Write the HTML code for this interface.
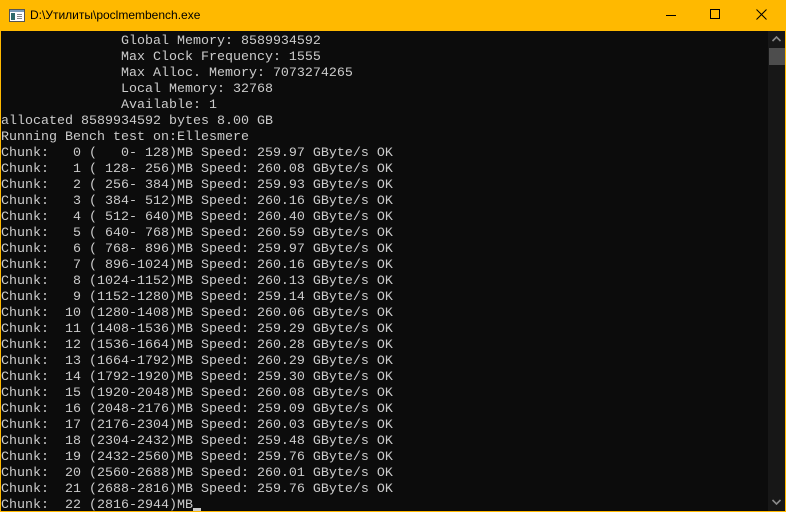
<!DOCTYPE html>
<html><head><meta charset="utf-8"><style>
*{margin:0;padding:0}
html,body{width:786px;height:512px;overflow:hidden;background:#ffb900}
.title{position:absolute;left:0;top:0;width:786px;height:31px;background:#ffb900;font-family:"Liberation Sans",sans-serif;font-size:12px;color:#000}
.title .t{position:absolute;left:30px;top:8px}
.con{position:absolute;left:1px;top:31px;width:767px;height:480px;background:#0c0c0c;overflow:hidden}
pre{font-family:"Liberation Mono",monospace;font-size:13.33px;line-height:16px;color:#cccccc;margin-top:3px;white-space:pre}
.sb{position:absolute;left:768px;top:31px;width:17px;height:480px;background:#171717}
.thumb{position:absolute;left:1px;top:17px;width:16px;height:17px;background:#4d4d4d}
.cur{display:inline-block;width:8px;height:3px;background:#ccc;vertical-align:-3px}
</style></head><body>
<div class="title">
<svg style="position:absolute;left:9px;top:9px" width="16" height="13"><rect x="0.5" y="0.5" width="15" height="12" fill="#fff" stroke="#555"/><rect x="1" y="1" width="14" height="2" fill="#7a9cb8"/><rect x="2" y="4" width="4" height="7" fill="#2f6b6b"/><rect x="8" y="5" width="5" height="1" fill="#888"/><rect x="8" y="7" width="5" height="1" fill="#888"/><rect x="8" y="9" width="5" height="1" fill="#888"/></svg>
<span class="t">D:\Утилиты\poclmembench.exe</span>
<svg style="position:absolute;left:666px;top:10px" width="12" height="12"><line x1="0" y1="5.5" x2="10" y2="5.5" stroke="#000"/></svg>
<svg style="position:absolute;left:710px;top:9px" width="12" height="12"><rect x="0.5" y="0.5" width="9" height="9" fill="none" stroke="#000"/></svg>
<svg style="position:absolute;left:756px;top:9px" width="12" height="12"><path d="M0.5 0.5L10.5 10.5M10.5 0.5L0.5 10.5" stroke="#000"/></svg>
</div>
<div class="con"><pre>               Global Memory: 8589934592
               Max Clock Frequency: 1555
               Max Alloc. Memory: 7073274265
               Local Memory: 32768
               Available: 1
allocated 8589934592 bytes 8.00 GB
Running Bench test on:Ellesmere
Chunk:   0 (   0- 128)MB Speed: 259.97 GByte/s OK
Chunk:   1 ( 128- 256)MB Speed: 260.08 GByte/s OK
Chunk:   2 ( 256- 384)MB Speed: 259.93 GByte/s OK
Chunk:   3 ( 384- 512)MB Speed: 260.16 GByte/s OK
Chunk:   4 ( 512- 640)MB Speed: 260.40 GByte/s OK
Chunk:   5 ( 640- 768)MB Speed: 260.59 GByte/s OK
Chunk:   6 ( 768- 896)MB Speed: 259.97 GByte/s OK
Chunk:   7 ( 896-1024)MB Speed: 260.16 GByte/s OK
Chunk:   8 (1024-1152)MB Speed: 260.13 GByte/s OK
Chunk:   9 (1152-1280)MB Speed: 259.14 GByte/s OK
Chunk:  10 (1280-1408)MB Speed: 260.06 GByte/s OK
Chunk:  11 (1408-1536)MB Speed: 259.29 GByte/s OK
Chunk:  12 (1536-1664)MB Speed: 260.28 GByte/s OK
Chunk:  13 (1664-1792)MB Speed: 260.29 GByte/s OK
Chunk:  14 (1792-1920)MB Speed: 259.30 GByte/s OK
Chunk:  15 (1920-2048)MB Speed: 260.08 GByte/s OK
Chunk:  16 (2048-2176)MB Speed: 259.09 GByte/s OK
Chunk:  17 (2176-2304)MB Speed: 260.03 GByte/s OK
Chunk:  18 (2304-2432)MB Speed: 259.48 GByte/s OK
Chunk:  19 (2432-2560)MB Speed: 259.76 GByte/s OK
Chunk:  20 (2560-2688)MB Speed: 260.01 GByte/s OK
Chunk:  21 (2688-2816)MB Speed: 259.76 GByte/s OK
Chunk:  22 (2816-2944)MB<span class="cur"></span></pre></div>
<div class="sb"><svg style="position:absolute;left:4px;top:5px" width="9" height="6"><path d="M0.5 5L4.5 1L8.5 5" stroke="#8a8a8a" stroke-width="1.6" fill="none"/></svg><div class="thumb"></div><svg style="position:absolute;left:4px;top:468px" width="9" height="6"><path d="M0.5 1L4.5 5L8.5 1" stroke="#8a8a8a" stroke-width="1.6" fill="none"/></svg></div>
</body></html>
